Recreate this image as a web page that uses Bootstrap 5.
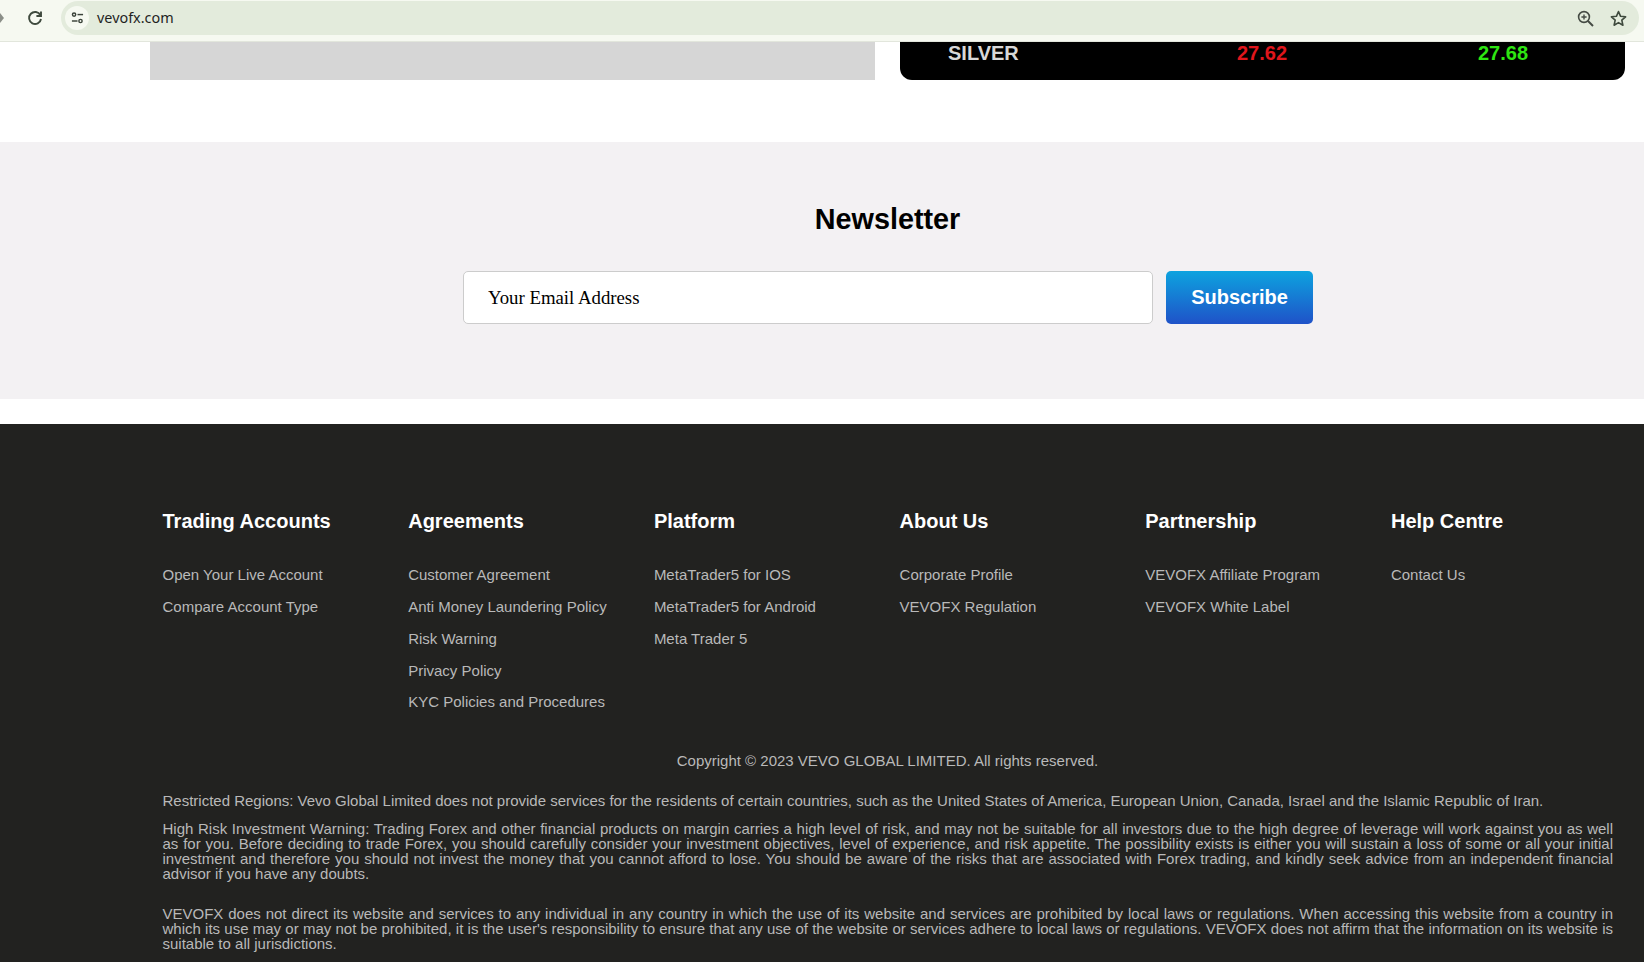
<!DOCTYPE html>
<html lang="en">
<head>
<meta charset="utf-8">
<title>VEVOFX</title>
<link href="https://cdn.jsdelivr.net/npm/bootstrap@5.3.0/dist/css/bootstrap.min.css" rel="stylesheet">
<style>
html,body{height:962px;overflow:hidden}
body{font-family:"Liberation Sans",Arial,sans-serif;background:#fff;color:#000}
.chromebar{height:42px;background:#f6f9f1;border-bottom:1px solid #e2e6dc;padding-top:1px}
.back-tip{width:4px;height:10px;margin-top:12px;margin-right:21px}
.reload-ic{width:20px;height:20px;margin-top:7px}
.omni{margin-left:16px;height:34px;width:1578px;background:#e3ebdc;border-radius:17px;padding-left:4px;padding-right:12px}
.tune-badge{width:24px;height:24px;background:#f6f9f1;border-radius:50%}
.url-text{font-family:"Noto Sans","Liberation Sans",sans-serif;font-size:14.4px;color:#1f1f1f;margin-left:8px;padding-bottom:1px}
.page-wrap{width:1475px;margin-left:150px}
.top-strip{height:38px;gap:25px}
.grey-panel{flex:0 0 725px;background:#d6d6d6}
.quote-panel{flex:0 0 725px;background:#000;border-radius:0 0 12px 12px;display:grid;grid-template-columns:289px 241px 1fr;padding-left:48px;font-size:20px;font-weight:700;line-height:23px}
.sym{color:#d8d8d8}.bid{color:#e0161c}.ask{color:#2ee612}
.news-band{margin-top:62px;height:257px;background:#f3f1f3;padding-top:59px}
.news-title{font-size:28.8px;font-weight:700;line-height:36px;margin:0 0 34px;text-align:center;width:100%;padding-left:131px}
.news-form{margin-left:463px;gap:13px}
.mail-box{width:690px;height:53px;border:1px solid #ccc;border-radius:5px;background:#fff;font-family:"Liberation Serif","Times New Roman",serif;font-size:18.8px;padding:0 24px;color:#000;outline:0}
.mail-box::placeholder{color:#000;opacity:1}
.sub-btn{width:147px;height:53px;border:0;border-radius:5px;background:linear-gradient(180deg,#0da3df,#1f52c8);color:#fff;font-size:20px;font-weight:700;padding:0 0 2px}
.foot{margin-top:25px;height:538px;background:#222220;color:#b9b9b9;font-size:15px}
.foot-cols{padding-top:85px;--bs-gutter-x:24px;margin-left:.5px;margin-right:0}
.foot-cols>div{width:245.7px;flex:0 0 auto}
.foot-head{font-size:20px;font-weight:700;line-height:24px;color:#fff;margin:0 0 28px}
.foot-list{list-style:none;padding:0;margin:0}
.foot-list li{height:32px;line-height:17px;padding-top:5px}
.foot-list li:nth-child(5){margin-top:-1px}
.foot-list a{color:#b9b9b9;text-decoration:none}
.copy-line{text-align:center;line-height:17px;margin:32px 0 0}
.legal{padding:0 12px 0 12.5px;text-align:justify;line-height:15px}
.legal p{margin:0}
.legal .r1{margin-top:23px;line-height:17px}
.legal .r2{margin-top:12px}
.legal .r3{margin-top:25px}
</style>
</head>
<body>
<div class="chromebar d-flex align-items-start">
  <svg class="back-tip flex-shrink-0" viewBox="0 0 4 10"><path d="M0 0 L4 5 L0 10Z" fill="#8b8f88"/></svg>
  <svg class="reload-ic flex-shrink-0" viewBox="0 0 20 20" fill="none" stroke="#3f4a3e" stroke-width="1.9"><path d="M15.4 7.2A6 6 0 1 0 16 11"/><path d="M16 3.4V8h-4.6" stroke-linejoin="miter"/></svg>
  <div class="omni d-flex align-items-center">
    <span class="tune-badge d-flex align-items-center justify-content-center flex-shrink-0">
      <svg width="13" height="12" viewBox="0 0 15 14" fill="none" stroke="#3a4239" stroke-width="1.7"><circle cx="3.5" cy="3" r="1.9"/><path d="M7.5 3H14"/><circle cx="11" cy="10.5" r="1.9"/><path d="M1 10.5H7.5"/></svg>
    </span>
    <span class="url-text flex-grow-1">vevofx.com</span>
    <svg class="me-3" width="17" height="17" viewBox="0 0 17 17" fill="none" stroke="#454b44" stroke-width="1.6"><circle cx="7" cy="7" r="5.4"/><path d="M11 11l5 5" stroke-width="2"/><path d="M4.4 7h5.2M7 4.4v5.2" stroke-width="1.4"/></svg>
    <svg width="17" height="17" viewBox="0 0 17 17" fill="none" stroke="#3f4a3e" stroke-width="1.6"><path d="M8.5 1.6l2.1 4.7 5 .5-3.8 3.4 1.1 5-4.4-2.6-4.4 2.6 1.1-5L1.4 6.8l5-.5z" stroke-linejoin="round"/></svg>
  </div>
</div>
<div class="page-wrap d-flex top-strip">
  <div class="grey-panel"></div>
  <div class="quote-panel"><span class="sym">SILVER</span><span class="bid">27.62</span><span class="ask">27.68</span></div>
</div>
<section class="news-band">
  <h2 class="news-title">Newsletter</h2>
  <form class="news-form d-flex" onsubmit="return false">
    <input class="mail-box" type="email" placeholder="Your Email Address">
    <button class="sub-btn btn" type="button">Subscribe</button>
  </form>
</section>
<footer class="foot">
  <div class="page-wrap">
    <div class="row foot-cols">
      <div><h5 class="foot-head">Trading Accounts</h5><ul class="foot-list"><li><a href="#">Open Your Live Account</a></li><li><a href="#">Compare Account Type</a></li></ul></div>
      <div><h5 class="foot-head">Agreements</h5><ul class="foot-list"><li><a href="#">Customer Agreement</a></li><li><a href="#">Anti Money Laundering Policy</a></li><li><a href="#">Risk Warning</a></li><li><a href="#">Privacy Policy</a></li><li><a href="#">KYC Policies and Procedures</a></li></ul></div>
      <div><h5 class="foot-head">Platform</h5><ul class="foot-list"><li><a href="#">MetaTrader5 for IOS</a></li><li><a href="#">MetaTrader5 for Android</a></li><li><a href="#">Meta Trader 5</a></li></ul></div>
      <div><h5 class="foot-head">About Us</h5><ul class="foot-list"><li><a href="#">Corporate Profile</a></li><li><a href="#">VEVOFX Regulation</a></li></ul></div>
      <div><h5 class="foot-head">Partnership</h5><ul class="foot-list"><li><a href="#">VEVOFX Affiliate Program</a></li><li><a href="#">VEVOFX White Label</a></li></ul></div>
      <div><h5 class="foot-head">Help Centre</h5><ul class="foot-list"><li><a href="#">Contact Us</a></li></ul></div>
    </div>
    <p class="copy-line">Copyright © 2023 VEVO GLOBAL LIMITED. All rights reserved.</p>
    <div class="legal">
      <p class="r1">Restricted Regions: Vevo Global Limited does not provide services for the residents of certain countries, such as the United States of America, European Union, Canada, Israel and the Islamic Republic of Iran.</p>
      <p class="r2">High Risk Investment Warning: Trading Forex and other financial products on margin carries a high level of risk, and may not be suitable for all investors due to the high degree of leverage will work against you as well as for you. Before deciding to trade Forex, you should carefully consider your investment objectives, level of experience, and risk appetite. The possibility exists is either you will sustain a loss of some or all your initial investment and therefore you should not invest the money that you cannot afford to lose. You should be aware of the risks that are associated with Forex trading, and kindly seek advice from an independent financial advisor if you have any doubts.</p>
      <p class="r3">VEVOFX does not direct its website and services to any individual in any country in which the use of its website and services are prohibited by local laws or regulations. When accessing this website from a country in which its use may or may not be prohibited, it is the user's responsibility to ensure that any use of the website or services adhere to local laws or regulations. VEVOFX does not affirm that the information on its website is suitable to all jurisdictions.</p>
    </div>
  </div>
</footer>
<script src="https://cdn.jsdelivr.net/npm/bootstrap@5.3.0/dist/js/bootstrap.bundle.min.js"></script>
</body>
</html>
